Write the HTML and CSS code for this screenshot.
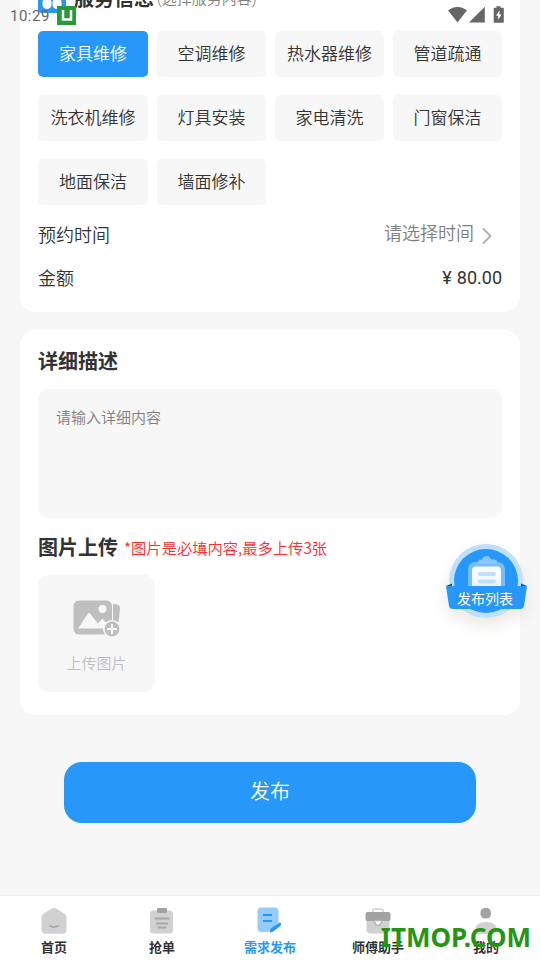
FILE: index.html
```html
<!DOCTYPE html>
<html lang="zh-CN">
<head>
<meta charset="UTF-8">
<title>需求发布</title>
<link rel="stylesheet" href="styles.css">
</head>
<body>
<div class="screen">
  <main class="content">
    <section class="card service">
      <header class="service-head">
        <svg class="service-icon" viewBox="0 0 28 28"><rect width="28" height="28" rx="4" fill="#2797f9"/><path d="m14 10-5 7M14 10l5 7" stroke="#fff" stroke-width="3" fill="none"/><rect x="4.500" y="13" width="9" height="11" rx="4.300" fill="#fff"/><rect x="14.500" y="13" width="9" height="11" rx="4.300" fill="#fff"/></svg>
        <h2>服务信息</h2><span class="hint">(选择服务内容)</span>
      </header>
      <div class="chips">
        <div class="chip active">家具维修</div><div class="chip">空调维修</div><div class="chip">热水器维修</div><div class="chip">管道疏通</div>
        <div class="chip">洗衣机维修</div><div class="chip">灯具安装</div><div class="chip">家电清洗</div><div class="chip">门窗保洁</div>
        <div class="chip">地面保洁</div><div class="chip">墙面修补</div>
      </div>
      <div class="row time"><span>预约时间</span><span class="picker">请选择时间<svg width="12" height="18" viewBox="0 0 12 18"><path d="M2 1.500 9.500 9 2 16.500" fill="none" stroke="#b2b2b2" stroke-width="2"/></svg></span></div>
      <div class="row"><span>金额</span><span class="price"><span class="yen">¥</span>80.00</span></div>
    </section>
    <section class="card detail">
      <h2>详细描述</h2>
      <div class="textarea">请输入详细内容</div>
      <div class="upload-head"><h2>图片上传</h2><span class="required">*图片是必填内容,最多上传3张</span></div>
      <div class="upload">
        <svg width="48" height="38" viewBox="0 0 48 38">
          <path d="M40 4h2.500q5 1 4.500 5l-1.500 13H40z" fill="#bfbfbf"/>
          <rect x="0" y="0" width="39.500" height="35" rx="6" fill="#bfbfbf" stroke="#f7f7f7" stroke-width="1"/>
          <circle cx="29.500" cy="9" r="4" fill="#f7f7f7"/>
          <path d="M5 28.500 15 13.500q1-1 2 0l8 10 4.500-5 8 10z" fill="#f7f7f7"/>
          <circle cx="39" cy="29" r="8.300" fill="#bfbfbf" stroke="#f7f7f7" stroke-width="1.600"/>
          <path d="M39 24v10M34 29h10" stroke="#f7f7f7" stroke-width="2"/>
        </svg>
        <span>上传图片</span>
      </div>
    </section>
    <button class="submit">发布</button>
  </main>

  <nav class="tabs">
    <div class="tab"><svg viewBox="0 0 28 28"><path d="M11.500 1.800q2.500-1.400 5 0l8 5q2 1.300 2 3.500v12.500q0 4-4 4h-17q-4 0-4-4V10.300q0-2.200 2-3.500z" fill="#d1d1d1"/><path d="M9.500 18.300q4.500 3.700 9 0" fill="none" stroke="#a8a8a8" stroke-width="1.700"/></svg><span>首页</span></div>
    <div class="tab"><svg viewBox="0 0 28 28"><rect x="2" y="3.500" width="23" height="23" rx="3.500" fill="#d1d1d1"/><rect x="9" y="1" width="10" height="5" rx="1" fill="#a3a3a3"/><path d="M6.500 11.500h15M8 16.500h12M9.500 20.500h9" stroke="#a8a8a8" stroke-width="1.800"/></svg><span>抢单</span></div>
    <div class="tab current"><svg viewBox="0 0 28 28"><path d="M5.500 .5h13q4 0 4 4V15.500L12 25H5.500q-4 0-4-4V4.500q0-4 4-4z" fill="#94cbfc"/><path d="M7 8h9M7 14h9" stroke="#2797f9" stroke-width="2.200"/><path d="m14 25 1-3.200 8.500-5.800 1.300.6-.5 2-8 6z" fill="#2797f9" stroke="#2797f9"/></svg><span>需求发布</span></div>
    <div class="tab"><svg viewBox="0 0 28 28"><path d="M9 5V4q0-2 2-2h6q2 0 2 2v1" fill="none" stroke="#d1d1d1" stroke-width="1.600"/><path d="M2.500 10h23v12.500q0 4-4 4h-15q-4 0-4-4z" fill="#d1d1d1"/><rect x="1.500" y="5" width="25" height="9" rx="2" fill="#a3a3a3"/><path d="M10.500 13.500h7v1.500q-1 3.500-3.500 3.500t-3.500-3.500z" fill="#fff" stroke="#b5b5b5" stroke-width="1.500"/></svg><span>师傅助手</span></div>
    <div class="tab"><svg viewBox="0 0 28 28"><rect x="8.500" y="1" width="10.500" height="10.500" rx="4.500" fill="#a3a3a3"/><path d="M3 24q0-9 11-9t11 9q-1 3-4 3H7q-3 0-4-3z" fill="#d1d1d1"/></svg><span>我的</span></div>
  </nav>

  <div class="status">
    <span class="clock">10:29</span>
    <svg class="app" width="19" height="19" viewBox="0 0 19 19"><rect width="19" height="19" fill="#2b9939"/><path d="M6 4v9.500h8V4" fill="none" stroke="#fff" stroke-width="2.500"/></svg>
    <svg class="signals" width="58" height="18" viewBox="0 0 58 18"><path d="M1 4.300q9.500-7 19 0L10.500 16.500zM37.800 .8v15.700H22z" fill="#666"/><path d="M49.500 .2h4v1.500H56q.8 0 .8.800V16q0 .8-.8.800h-8.500q-.8 0-.8-.8V2.500q0-.8.800-.8h2z" fill="#666"/><path d="m52.500 4.500-3.500 5.300h2.200v4l3.300-5.300h-2z" fill="#fff"/></svg>
  </div>

  <div class="float-entry">
    <svg width="82" height="76" viewBox="0 0 82 76">
      <defs><linearGradient id="paper" x2="0" y2="1"><stop stop-color="#fff"/><stop offset="1" stop-color="#dceeff"/></linearGradient></defs>
      <circle cx="40" cy="37" r="37" fill="#bfe0fd"/><circle cx="40" cy="37" r="32" fill="#2797f9"/>
      <rect x="22" y="18" width="37" height="38" rx="7" fill="#76bdfb"/>
      <rect x="26" y="22.500" width="29" height="32" rx="4" fill="url(#paper)"/>
      <path d="M36 15.500q1-3.500 4.500-3.500t4.500 3.500h3q3.500 0 3.500 4.500h-20q0-4.500 3.500-4.500z" fill="#8ac7fc"/>
      <path d="M34 30h14M34 37.500h14" stroke="#c0dffd" stroke-width="4" stroke-linecap="round"/>
      <path d="m0 42 6-2.500v4zM81 42l-6-2.500v4z" fill="#075595"/>
      <path d="M0 42h81l-3 20q-.5 3-4 3H7q-3.500 0-4-3z" fill="#2797f9"/>
    </svg>
    <span>发布列表</span>
  </div>
  <div class="watermark">ITMOP.COM</div>
</div>
</body>
</html>
```
FILE: styles.css
```css
* { box-sizing: border-box; }
body { margin: 0; font-family: Roboto, "Noto Sans CJK SC", sans-serif; color: #333; }
h2 { margin: 0; font-size: 20px; line-height: 30px; font-weight: 700; }
.screen { position: relative; display: flex; flex-direction: column; width: 540px; height: 960px; overflow: hidden; background: #f7f7f7; }
.content { flex: 1; min-height: 0; padding: 0 20px; }
.card { padding: 0 18px; background: #fff; border-radius: 15px; }
.service { height: 332px; margin-top: -20px; font-weight: 350; }
.service-head { display: flex; height: 51px; align-items: flex-start; }
.service-icon { width: 28px; height: 28px; margin: 5px 8px 0 0; }
.service-head h2 { line-height: 38px; }
.hint { margin-left: 3px; font-size: 15px; line-height: 38px; color: #808080; }
.chips { display: grid; grid-template-columns: 110px repeat(3, 1fr); column-gap: 9px; row-gap: 18px; }
.chip { height: 46px; border-radius: 5px; background: #f7f7f7; font-size: 17px; line-height: 47px; text-align: center; white-space: nowrap; }
.chip.active { background: #2797f9; color: #fff; }
.row { display: flex; justify-content: space-between; align-items: center; height: 43px; font-size: 18px; }
.time { margin-top: 7px; }
.picker { display: flex; align-items: center; gap: 7px; margin-right: 9px; color: #808080; line-height: 40px; }
.picker svg { margin-top: 5px; }
.price { display: flex; align-items: center; padding-top: 1px; font-weight: 400; }
.yen { width: 14.500px; }
.detail { height: 385px; margin-top: 18px; padding-top: 17px; }
.textarea { height: 129px; margin-top: 12px; padding: 18px 18px; border-radius: 10px; background: #f7f7f7; color: #808080; font-size: 15px; font-weight: 350; line-height: 23px; }
.upload-head { display: flex; align-items: center; height: 30px; margin: 15px 0 12px; }
.required { margin: -2px 0 0 6px; color: #ff2d2d; font-family: "Noto Sans CJK SC", sans-serif; font-size: 15.300px; font-weight: 350; }
.upload { display: flex; flex-direction: column; align-items: center; width: 117px; height: 117px; padding-top: 25px; border-radius: 10px; background: #f7f7f7; color: #bfbfbf; font-size: 15px; font-weight: 350; line-height: 22px; }
.upload span { margin-top: 15px; }
.submit { display: block; width: 412px; height: 61px; margin: 47px auto 0; padding: 0 0 5px; border: 0; border-radius: 18px; background: #2797f9; color: #fff; font: 350 20px Roboto, "Noto Sans CJK SC", sans-serif; }
.tabs { display: flex; height: 65px; border-top: 1px solid #f0f0f0; background: #fff; }
.tab { display: flex; flex: 1; flex-direction: column; align-items: center; padding-top: 11px; font-size: 13px; line-height: 20px; font-weight: 600; }
.tab svg { width: 28px; height: 28px; margin-bottom: 3px; }
.tab.current { color: #2797f9; }
.status { position: absolute; inset: 0 0 auto; display: flex; align-items: flex-start; height: 30px; padding: 6px 35px 0 10px; }
.clock { width: 47px; font-size: 15px; line-height: 20px; color: #666; letter-spacing: .5px; }
.signals { margin-left: auto; }
.float-entry { position: absolute; left: 446px; top: 544px; width: 82px; height: 76px; }
.float-entry svg { display: block; filter: drop-shadow(0 8px 7px rgba(100, 70, 40, .12)); }
.float-entry span { position: absolute; left: 0; right: 4px; top: 45px; text-align: center; color: #fff; font-size: 14px; line-height: 20px; font-weight: 400; }
.watermark { position: absolute; right: 9px; top: 920px; font: 700 26px/34px "Noto Sans", sans-serif; color: #249512; }
```
